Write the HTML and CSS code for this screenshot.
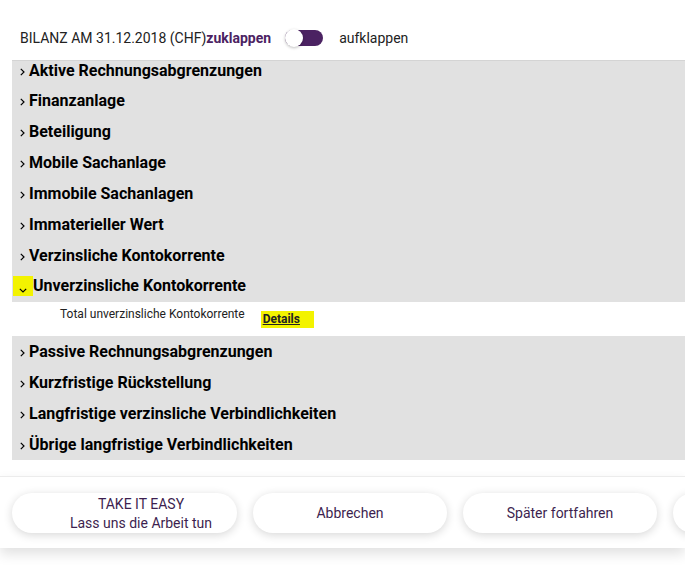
FILE: index.html
```html
<!DOCTYPE html>
<html lang="de">
<head>
  <meta charset="UTF-8" />
  <title>Bilanz</title>
  <link rel="stylesheet" href="styles.css">
</head>
<body>
  <div class="page">
    <div class="toolbar">
      <span class="title">BILANZ AM 31.12.2018 (CHF)</span>
      <span class="collapse">zuklappen</span>
      <span class="switch"><span class="knob"></span></span>
      <span class="expand">aufklappen</span>
    </div>

    <div class="panel">
      <div class="row"><span class="arrow"><svg width="5" height="8" viewBox="0 0 5 8"><path d="M0.8 0.8 L4 4 L0.8 7.2" fill="none" stroke="#000" stroke-width="1.2"/></svg></span>Aktive Rechnungsabgrenzungen</div>
      <div class="row"><span class="arrow"><svg width="5" height="8" viewBox="0 0 5 8"><path d="M0.8 0.8 L4 4 L0.8 7.2" fill="none" stroke="#000" stroke-width="1.2"/></svg></span>Finanzanlage</div>
      <div class="row"><span class="arrow"><svg width="5" height="8" viewBox="0 0 5 8"><path d="M0.8 0.8 L4 4 L0.8 7.2" fill="none" stroke="#000" stroke-width="1.2"/></svg></span>Beteiligung</div>
      <div class="row"><span class="arrow"><svg width="5" height="8" viewBox="0 0 5 8"><path d="M0.8 0.8 L4 4 L0.8 7.2" fill="none" stroke="#000" stroke-width="1.2"/></svg></span>Mobile Sachanlage</div>
      <div class="row"><span class="arrow"><svg width="5" height="8" viewBox="0 0 5 8"><path d="M0.8 0.8 L4 4 L0.8 7.2" fill="none" stroke="#000" stroke-width="1.2"/></svg></span>Immobile Sachanlagen</div>
      <div class="row"><span class="arrow"><svg width="5" height="8" viewBox="0 0 5 8"><path d="M0.8 0.8 L4 4 L0.8 7.2" fill="none" stroke="#000" stroke-width="1.2"/></svg></span>Immaterieller Wert</div>
      <div class="row"><span class="arrow"><svg width="5" height="8" viewBox="0 0 5 8"><path d="M0.8 0.8 L4 4 L0.8 7.2" fill="none" stroke="#000" stroke-width="1.2"/></svg></span>Verzinsliche Kontokorrente</div>
      <div class="row open"><span class="arrow"><svg width="8" height="5" viewBox="0 0 8 5"><path d="M0.8 0.8 L4 4 L7.2 0.8" fill="none" stroke="#000" stroke-width="1.2"/></svg></span>Unverzinsliche Kontokorrente</div>
      <div class="detail">
        <span class="detail-label">Total unverzinsliche Kontokorrente</span>
        <a class="detail-link" href="#">Details</a>
      </div>
      <div class="row"><span class="arrow"><svg width="5" height="8" viewBox="0 0 5 8"><path d="M0.8 0.8 L4 4 L0.8 7.2" fill="none" stroke="#000" stroke-width="1.2"/></svg></span>Passive Rechnungsabgrenzungen</div>
      <div class="row"><span class="arrow"><svg width="5" height="8" viewBox="0 0 5 8"><path d="M0.8 0.8 L4 4 L0.8 7.2" fill="none" stroke="#000" stroke-width="1.2"/></svg></span>Kurzfristige Rückstellung</div>
      <div class="row"><span class="arrow"><svg width="5" height="8" viewBox="0 0 5 8"><path d="M0.8 0.8 L4 4 L0.8 7.2" fill="none" stroke="#000" stroke-width="1.2"/></svg></span>Langfristige verzinsliche Verbindlichkeiten</div>
      <div class="row"><span class="arrow"><svg width="5" height="8" viewBox="0 0 5 8"><path d="M0.8 0.8 L4 4 L0.8 7.2" fill="none" stroke="#000" stroke-width="1.2"/></svg></span>Übrige langfristige Verbindlichkeiten</div>
    </div>

    <div class="footer">
      <button class="pill pill-easy">TAKE IT EASY<br>Lass uns die Arbeit tun</button>
      <button class="pill">Abbrechen</button>
      <button class="pill">Später fortfahren</button>
      <button class="pill" aria-label="Weiter"></button>
    </div>
  </div>
</body>
</html>
```

FILE: styles.css
```css
* { box-sizing: border-box; }
html, body {
  margin: 0;
  background: #fff;
  overflow: hidden;
}
body {
  font-family: Roboto, "Liberation Sans", Arial, sans-serif;
  color: #222;
}
.page {
  width: 685px;
  height: 570px;
  overflow: hidden;
}
.toolbar {
  display: flex;
  align-items: center;
  height: 60px;
  padding: 16px 0 0 20px;
  font-size: 14px;
}
.collapse {
  color: #4b2262;
  font-weight: bold;
}
.switch {
  display: inline-flex;
  align-items: center;
  width: 38px;
  height: 16px;
  margin: 0 16px 0 14px;
  border-radius: 8px;
  background: #4b2262;
}
.knob {
  width: 18px;
  height: 18px;
  border-radius: 50%;
  background: #fff;
  box-shadow: 0 1px 3px rgba(0,0,0,0.25);
}
.expand {
  color: #222;
}
.panel {
  margin-left: 12px;
  background: #e1e1e1;
  border-top: 1px solid #d4d4d4;
}
.row {
  display: flex;
  align-items: flex-start;
  height: 31px;
  padding: 6px 0 0 8px;
  font-size: 16px;
  line-height: 19px;
  font-weight: bold;
  color: #000;
}
.row:first-child {
  height: 24px;
  padding-top: 0;
}
.arrow {
  display: inline-flex;
  align-items: center;
  justify-content: center;
  width: 5px;
  height: 19px;
  margin-right: 4px;
  padding-top: 2px;
}
.row.open {
  padding-top: 5px;
}
.row.open .arrow {
  width: 20px;
  height: 20px;
  margin-left: -7px;
  margin-right: 0;
  padding-top: 8px;
  background: #f3f300;
}
.detail {
  display: flex;
  align-items: flex-start;
  height: 34px;
  padding: 5px 0 0 48px;
  background: #fff;
  font-size: 12px;
  line-height: 14px;
}
.detail-label {
  color: #222;
}
.detail-link {
  margin: 4px 0 0 16px;
  padding: 1px 14px 2px 2px;
  background: #f3f300;
  color: #222;
  font-weight: bold;
  text-decoration: underline;
}
.footer {
  display: flex;
  gap: 16px;
  margin-top: 16px;
  height: 72px;
  padding: 16px 0 0 12px;
  border-top: 1px solid #ececec;
  background: #fff;
  box-shadow: 0 6px 12px rgba(0,0,0,0.12);
  overflow: hidden;
}
.pill {
  flex: none;
  width: 194px;
  height: 40px;
  border: none;
  border-radius: 20px;
  background: #fff;
  box-shadow: 0 2px 10px rgba(0,0,0,0.16);
  font-family: inherit;
  font-size: 14px;
  line-height: 19px;
  color: #3d1f4f;
}
.pill-easy {
  width: 225px;
  padding: 2px 0 0 33px;
}
```
